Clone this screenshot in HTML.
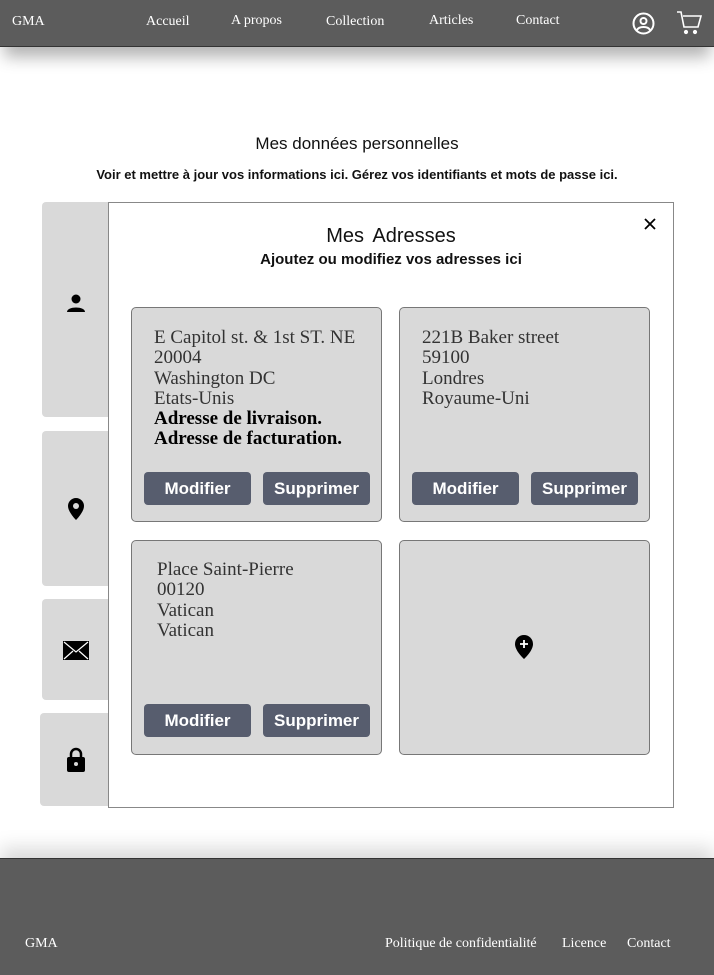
<!DOCTYPE html>
<html><head><meta charset="utf-8"><style>
*{margin:0;padding:0;box-sizing:border-box}
body{width:714px;height:975px;background:#fff;font-family:"Liberation Sans",sans-serif;position:relative;overflow:hidden}
.a{position:absolute}
header{position:absolute;left:0;top:0;width:714px;height:47px;background:#5c5c5c;box-shadow:0 14px 16px -4px rgba(0,0,0,.3);border-bottom:1px solid #333}
.serif{font-family:"Liberation Serif",serif;color:#fff;font-size:14px}
.tab{position:absolute;background:#d9d9d9;border-radius:4px}
.modal{position:absolute;left:108px;top:202px;width:566px;height:606px;border:1px solid #888;background:#fff}
.card{position:absolute;width:251px;height:215px;background:#d9d9d9;border:1px solid #777;border-radius:5px}
.addr{position:absolute;left:22px;top:20px;font-family:"Liberation Serif",serif;font-size:19px;line-height:20.3px;color:#333}
.addr b{color:#000}
.btn{position:absolute;top:164px;width:107px;height:33px;background:#575d6e;border-radius:4px;color:#fff;font-weight:bold;font-size:17px;text-align:center;line-height:33px}
footer{position:absolute;left:0;top:858px;width:714px;height:117px;background:#5c5c5c;border-top:1px solid #333;box-shadow:0 -10px 18px rgba(0,0,0,.15)}
</style></head><body>
<header>
<div class="a serif" style="left:12px;top:14px">GMA</div>
<div class="a serif" style="left:146px;top:14px">Accueil</div>
<div class="a serif" style="left:231px;top:13px">A propos</div>
<div class="a serif" style="left:326px;top:14px">Collection</div>
<div class="a serif" style="left:429px;top:13px">Articles</div>
<div class="a serif" style="left:516px;top:13px">Contact</div>
<svg class="a" style="left:632px;top:12px" width="23" height="23" viewBox="0 0 23 23" fill="none" stroke="#fff" stroke-width="2"><circle cx="11.5" cy="11.5" r="10"/><circle cx="11.5" cy="9" r="3"/><path d="M5 18c2-4 11-4 13 0"/></svg>
<svg class="a" style="left:676px;top:10px" width="26" height="26" viewBox="0 0 26 26" fill="none" stroke="#fff" stroke-width="1.6"><path d="M1 2h4l3 15h14l3-11H7"/><circle cx="10" cy="22" r="1.3" fill="#fff"/><circle cx="19" cy="22" r="1.3" fill="#fff"/></svg>
</header>
<div class="a" style="left:0;top:134px;width:714px;text-align:center;font-size:17px;color:#111">Mes données personnelles</div>
<div class="a" style="left:0;top:167px;width:714px;text-align:center;font-size:13px;font-weight:bold;color:#111">Voir et mettre à jour vos informations ici. Gérez vos identifiants et mots de passe ici.</div>
<div class="tab" style="left:42px;top:202px;width:70px;height:215px"></div>
<div class="tab" style="left:42px;top:431px;width:70px;height:155px"></div>
<div class="tab" style="left:42px;top:599px;width:70px;height:101px"></div>
<div class="tab" style="left:40px;top:713px;width:72px;height:93px"></div>
<svg class="a" style="left:66px;top:293px" width="20" height="20" viewBox="0 0 20 20"><circle cx="10" cy="6" r="4.5"/><path d="M1 19c0-6 18-6 18 0z"/></svg>
<svg class="a" style="left:67px;top:498px" width="18" height="22" viewBox="0 0 18 22"><path d="M9 0a8 8 0 0 0-8 8c0 6 8 14 8 14s8-8 8-14a8 8 0 0 0-8-8z"/><circle cx="9" cy="8" r="3" fill="#d9d9d9"/></svg>
<svg class="a" style="left:63px;top:641px" width="26" height="19" viewBox="0 0 26 19"><rect width="26" height="19"/><path d="M1 1l12 10L25 1M1 18l9-8M25 18l-9-8" stroke="#fff" stroke-width="1.2" fill="none"/></svg>
<svg class="a" style="left:66px;top:747px" width="20" height="25" viewBox="0 0 20 25"><path d="M5 11V7a5 5 0 0 1 10 0v4" stroke="#000" stroke-width="2.5" fill="none"/><rect x="1" y="10" width="18" height="15" rx="2"/><circle cx="10" cy="17" r="2" fill="#d9d9d9"/></svg>
<div class="modal">
<div class="a" style="left:0;top:22px;width:564px;text-align:center;font-size:20px;color:#111;word-spacing:4px">Mes Adresses</div>
<div class="a" style="left:0;top:48px;width:564px;text-align:center;font-size:15px;font-weight:bold;color:#111">Ajoutez ou modifiez vos adresses ici</div>
<svg class="a" style="left:535px;top:15px" width="12" height="12" viewBox="0 0 12 12" stroke="#000" stroke-width="1.8"><path d="M1 1l10 10M11 1L1 11"/></svg>
<div class="card" style="left:22px;top:104px"><div class="addr">E Capitol st. &amp; 1st ST. NE<br>20004<br>Washington DC<br>Etats-Unis<br><b>Adresse de livraison.<br>Adresse de facturation.</b></div><div class="btn" style="left:12px">Modifier</div><div class="btn" style="left:131px">Supprimer</div></div>
<div class="card" style="left:290px;top:104px"><div class="addr">221B Baker street<br>59100<br>Londres<br>Royaume-Uni</div><div class="btn" style="left:12px">Modifier</div><div class="btn" style="left:131px">Supprimer</div></div>
<div class="card" style="left:22px;top:337px"><div class="addr" style="left:25px;top:19px">Place Saint-Pierre<br>00120<br>Vatican<br>Vatican</div><div class="btn" style="left:12px;top:163px">Modifier</div><div class="btn" style="left:131px;top:163px">Supprimer</div></div>
<div class="card" style="left:290px;top:337px"><svg class="a" style="left:114px;top:94px" width="20" height="24" viewBox="0 0 20 24"><path d="M10 0a9 9 0 0 0-9 9c0 7 9 15 9 15s9-8 9-15a9 9 0 0 0-9-9z"/><path d="M10 5v8M6 9h8" stroke="#fff" stroke-width="1.8"/></svg></div>
</div>
<footer>
<div class="a serif" style="left:25px;top:77px">GMA</div>
<div class="a serif" style="left:385px;top:77px">Politique de confidentialité</div>
<div class="a serif" style="left:562px;top:77px">Licence</div>
<div class="a serif" style="left:627px;top:77px">Contact</div>
</footer>
</body></html>
